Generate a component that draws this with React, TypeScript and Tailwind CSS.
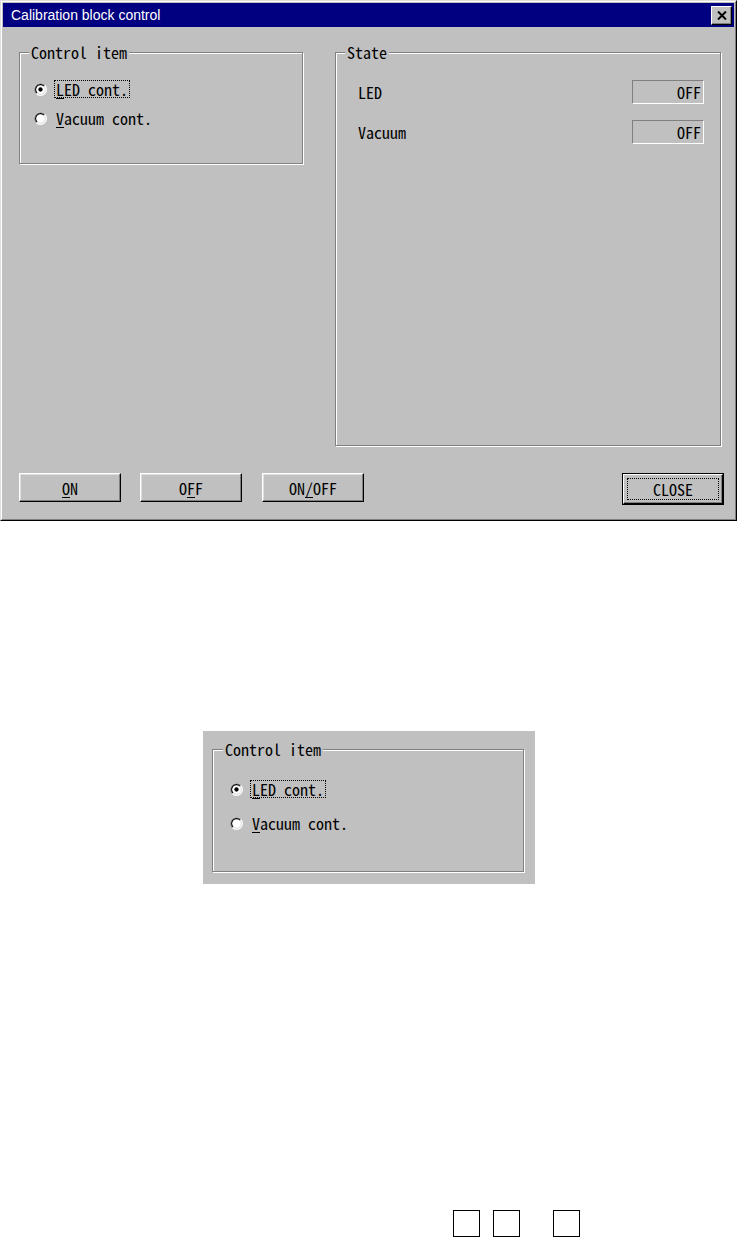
import React from "react";

const mono = "font-['Noto_Sans_Mono_CJK_JP','Noto_Sans_Mono_CJK_SC','DejaVu_Sans_Mono',monospace] font-light";

function Radio({ checked }: { checked?: boolean }) {
  return (
    <svg width="13" height="13" viewBox="0 0 12 12" className="flex-none" aria-hidden>
      <circle cx="6" cy="6" r="6" fill="#ffffff" />
      <path d="M1.76 10.24 A6 6 0 0 1 10.24 1.76 Z" fill="#808080" />
      <circle cx="6" cy="6" r="5" fill="#dfdfdf" />
      <path d="M2.46 9.54 A5 5 0 0 1 9.54 2.46 Z" fill="#000000" />
      <circle cx="6" cy="6" r="4" fill="#ffffff" />
      {checked && <circle cx="6" cy="6" r="2" fill="#000000" />}
    </svg>
  );
}

function GroupBox({
  label,
  labelLeft = "left-[9px]",
  className,
  children,
}: {
  label: string;
  labelLeft?: string;
  className: string;
  children: React.ReactNode;
}) {
  return (
    <div
      className={`relative border border-[#808080] shadow-[inset_1px_1px_0_#fff,1px_1px_0_#fff] ${className}`}
    >
      <span
        className={`absolute -top-[9px] ${labelLeft} bg-[#c0c0c0] px-[2px] text-[16px] leading-[16px] text-black ${mono}`}
      >
        {label}
      </span>
      {children}
    </div>
  );
}

function ControlItems({ rowGap, padTop, padLeft }: { rowGap: string; padTop: string; padLeft: string }) {
  return (
    <div className={`flex flex-col ${rowGap} ${padTop} ${padLeft}`}>
      <div className="flex h-[20px] items-center gap-[7px]">
        <Radio checked />
        <span
          className={`border border-dotted border-black px-[1px] text-[16px] leading-[16px] text-black ${mono}`}
        >
          <u className="underline-offset-2">L</u>ED cont.
        </span>
      </div>
      <div className="flex h-[20px] items-center gap-[8px]">
        <Radio />
        <span className={`px-[1px] text-[16px] leading-[16px] text-black ${mono}`}>
          <u className="underline-offset-2">V</u>acuum cont.
        </span>
      </div>
    </div>
  );
}

function Button({ children }: { children: React.ReactNode }) {
  return (
    <div
      className={`flex h-[29px] w-[102px] items-center justify-center border-t border-l border-r border-b border-t-white border-l-white border-r-black border-b-black bg-[#c0c0c0] shadow-[inset_-1px_-1px_0_#808080,inset_1px_1px_0_#dfdfdf] text-[16px] leading-[16px] text-black ${mono}`}
    >
      {children}
    </div>
  );
}

export default function App() {
  return (
    <div className="flex h-[1238px] w-[738px] flex-col bg-white">
      {/* ------- DIALOG WINDOW ------- */}
      <div className="h-[521px] w-[737px] border border-t-[#dfdfdf] border-l-[#dfdfdf] border-r-black border-b-black bg-[#c0c0c0]">
        <div className="flex h-full flex-col border border-t-white border-l-white border-r-[#808080] border-b-[#808080] p-[1px]">
          {/* title bar */}
          <div className="flex h-[24px] items-center justify-between bg-[#000080] pl-[8px] pr-[2px]">
            <span className="font-['Liberation_Sans',Arial,sans-serif] text-[14px] leading-none text-white">
              Calibration block control
            </span>
            <div className="flex h-[19px] w-[21px] items-center justify-center border border-t-white border-l-white border-r-black border-b-black bg-[#c0c0c0] shadow-[inset_-1px_-1px_0_#808080]">
              <svg width="10" height="9" viewBox="0 0 10 9" aria-hidden>
                <path d="M1 0.5 L9 8.5 M9 0.5 L1 8.5" stroke="#000" strokeWidth="2" />
              </svg>
            </div>
          </div>

          {/* groups */}
          <div className="mt-[25px] flex items-start pl-[16px]">
            <GroupBox label="Control item" className="h-[112px] w-[284px]">
              <ControlItems rowGap="gap-[9px]" padTop="pt-[26px]" padLeft="pl-[14px]" />
            </GroupBox>
            <GroupBox label="State" className="ml-[32px] h-[394px] w-[386px]">
              <div className={`flex flex-col gap-[16px] pt-[27px] pl-[22px] pr-[16px] text-[16px] leading-[16px] text-black ${mono}`}>
                <div className="flex h-[24px] items-center justify-between">
                  <span>LED</span>
                  <div className="flex h-[24px] w-[72px] items-center justify-end border border-t-[#808080] border-l-[#808080] border-r-white border-b-white pr-[2px]">
                    OFF
                  </div>
                </div>
                <div className="flex h-[24px] items-center justify-between">
                  <span>Vacuum</span>
                  <div className="flex h-[24px] w-[72px] items-center justify-end border border-t-[#808080] border-l-[#808080] border-r-white border-b-white pr-[2px]">
                    OFF
                  </div>
                </div>
              </div>
            </GroupBox>
          </div>

          {/* buttons */}
          <div className="mt-[27px] flex items-start pl-[16px] pr-[10px]">
            <Button>
              <u className="underline-offset-2">O</u>N
            </Button>
            <div className="ml-[19px]">
              <Button>
                O<u className="underline-offset-2">F</u>F
              </Button>
            </div>
            <div className="ml-[20px]">
              <Button>
                ON<u className="underline-offset-2">/</u>OFF
              </Button>
            </div>
            <div className="ml-auto border border-black">
              <div
                className={`flex h-[30px] w-[100px] items-center justify-center border border-t-white border-l-white border-r-black border-b-black bg-[#c0c0c0] shadow-[inset_-1px_-1px_0_#808080] p-[3px] text-[16px] leading-[16px] text-black ${mono}`}
              >
                <div className="flex h-full w-full items-center justify-center border border-dotted border-black">
                  CLOSE
                </div>
              </div>
            </div>
          </div>
        </div>
      </div>

      {/* ------- ENLARGED GROUP ------- */}
      <div className="ml-[203px] mt-[210px] h-[153px] w-[332px] bg-[#c0c0c0] pl-[9px] pt-[18px]">
        <GroupBox label="Control item" labelLeft="left-[10px]" className="h-[123px] w-[312px]">
          <ControlItems rowGap="gap-[14px]" padTop="pt-[29px]" padLeft="pl-[17px]" />
        </GroupBox>
      </div>

      {/* ------- CHECK BOXES ------- */}
      <div className="ml-[453px] mt-[326px] flex">
        <div className="h-[27px] w-[27px] border border-black" />
        <div className="ml-[13px] h-[27px] w-[27px] border border-black" />
        <div className="ml-[33px] h-[27px] w-[27px] border border-black" />
      </div>
    </div>
  );
}
